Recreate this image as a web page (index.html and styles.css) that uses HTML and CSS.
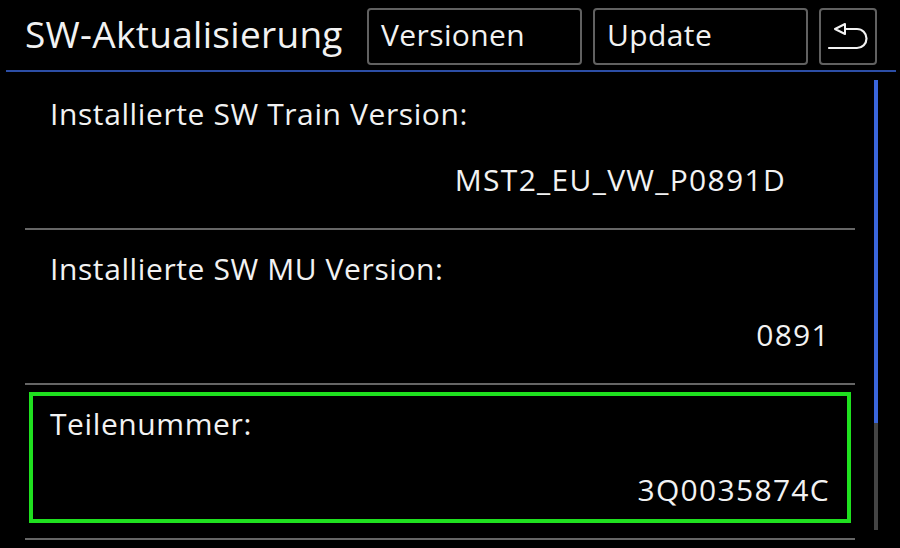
FILE: index.html
```html
<!DOCTYPE html>
<html lang="de">
<head>
    <meta charset="UTF-8">
    <meta name="viewport" content="width=device-width, initial-scale=1.0">
    <title>SW-Aktualisierung</title>
    <link rel="stylesheet" href="styles.css">
</head>
<body>
    <div class="screen">
        <div class="header">
            <h1 class="title">SW-Aktualisierung</h1>
            <button class="btn btn-wide">Versionen</button>
            <button class="btn btn-wide">Update</button>
            <button class="btn btn-back" aria-label="Zurück">
                <svg width="58" height="57" viewBox="0 0 58 57">
                    <path d="M26 16 L16 21 L26 26 Z" fill="none" stroke="#f2f2f2" stroke-width="2" stroke-linejoin="round"/>
                    <path d="M26 21 H38 A9.5 9.5 0 0 1 38 40 H10" fill="none" stroke="#f2f2f2" stroke-width="2.2" stroke-linecap="round"/>
                </svg>
            </button>
        </div>

        <div class="content">
            <div class="list">
                <div class="row">
                    <div class="row-inner row-inner-short">
                        <div class="label">Installierte SW Train Version:</div>
                        <div class="value">MST2_EU_VW_P0891D</div>
                    </div>
                </div>
                <div class="row">
                    <div class="row-inner">
                        <div class="label">Installierte SW MU Version:</div>
                        <div class="value">0891</div>
                    </div>
                </div>
                <div class="row selected">
                    <div class="row-inner">
                        <div class="label">Teilenummer:</div>
                        <div class="value">3Q0035874C</div>
                    </div>
                </div>
            </div>

            <!-- Scrollbalken -->
            <div class="scrollbar">
                <div class="scroll-thumb"></div>
            </div>
        </div>
    </div>
</body>
</html>
```

FILE: styles.css
```css
html, body {
    margin: 0;
    padding: 0;
    background-color: #000;
}
body {
    width: 900px;
    height: 548px;
    overflow: hidden;
    font-family: "Open Sans", "Noto Sans", sans-serif;
    color: #f2f2f2;
}
.screen {
    display: flex;
    flex-direction: column;
    height: 100%;
}
.header {
    display: flex;
    align-items: flex-start;
    gap: 11px;
    height: 62px;
    margin: 0 4px 0 6px;
    padding: 8px 19px 0 19px;
    border-bottom: 2px solid #2c4ea6;
}
.title {
    flex: 1;
    margin: 0;
    font-size: 37px;
    font-weight: normal;
    line-height: 52px;
    white-space: nowrap;
    letter-spacing: 0.3px;
}
.btn {
    height: 57px;
    margin: 0;
    padding: 0 0 4px 12px;
    background-color: #000;
    border: 2px solid #616161;
    border-radius: 4px;
    color: #f2f2f2;
    font-family: inherit;
    font-size: 30px;
    letter-spacing: 0.4px;
    text-align: left;
    box-sizing: border-box;
}
.btn-wide {
    width: 215px;
}
.btn-back {
    width: 58px;
    padding: 0;
    display: flex;
    align-items: center;
    justify-content: center;
}
.btn-back svg {
    display: block;
    flex-shrink: 0;
}
.content {
    display: flex;
    flex: 1;
}
.list {
    width: 830px;
    margin-left: 25px;
    padding-top: 3px;
}
.row {
    padding: 7px 4px 15px;
    border-bottom: 2px solid #666;
}
.row-inner {
    padding: 12px 17px 11px;
    border: 4px solid transparent;
}
.row.selected .row-inner {
    border-color: #1fe01f;
}
.label {
    font-size: 30px;
    line-height: 32px;
    letter-spacing: 0.6px;
}
.value {
    margin-top: 32px;
    font-size: 30px;
    line-height: 36px;
    letter-spacing: 1.3px;
    text-align: right;
}
.row-inner-short .value {
    margin-right: 44px;
}
.scrollbar {
    width: 4px;
    height: 450px;
    margin: 8px 0 0 19px;
    background-color: #444;
}
.scroll-thumb {
    height: 343px;
    background-color: #3a66dc;
}
```
